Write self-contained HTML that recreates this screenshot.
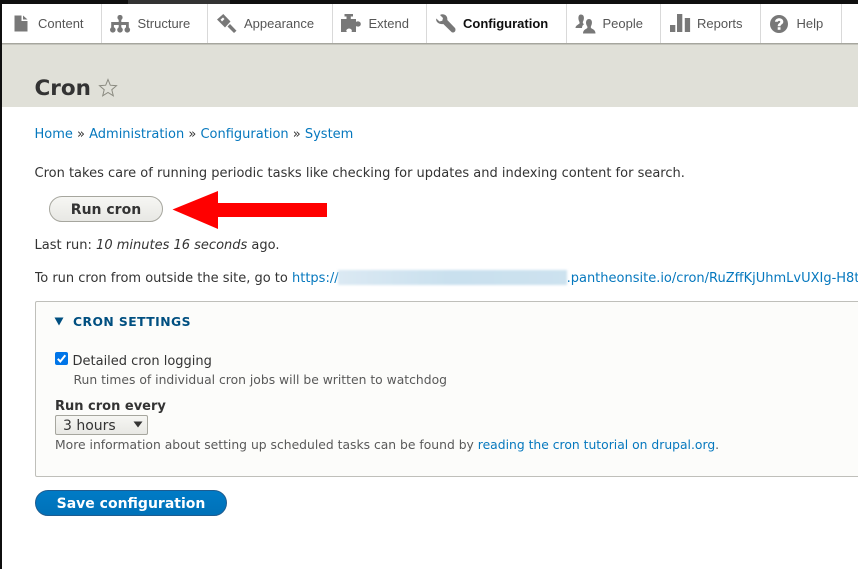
<!DOCTYPE html>
<html><head><meta charset="utf-8"><style>
html,body{margin:0;padding:0;width:858px;height:569px;overflow:hidden;background:#fff}
body{position:relative;font-family:"DejaVu Sans",sans-serif;font-size:13px;color:#333}
.a{position:absolute;white-space:nowrap}
.n{position:absolute;top:4px;height:39px;line-height:39px;font-family:"Liberation Sans",sans-serif;font-size:13px;color:#565656;white-space:nowrap}
.d{position:absolute;top:4px;height:39px;width:1px;background:#d9d9d9}
svg{position:absolute}
a{color:#0678be;text-decoration:none}
.t{line-height:16px}
</style></head><body>
<div class="a" style="left:0;top:0;width:858px;height:4px;background:#0f0f0f"></div>
<div class="a" style="left:128px;top:0;width:102px;height:4px;background:#333"></div>
<div class="a" style="left:2px;top:4px;width:856px;height:39px;background:#fff"></div>
<div class="a" style="left:2px;top:45px;width:856px;height:62px;background:#e0e0d8"></div>
<div class="a" style="left:2px;top:43px;width:856px;height:1px;background:#a6a69e"></div>
<div class="a" style="left:2px;top:44px;width:856px;height:1px;background:#c4c4bc"></div>

<div class="d" style="left:101px"></div><div class="d" style="left:207px"></div><div class="d" style="left:332px"></div><div class="d" style="left:426px"></div><div class="d" style="left:566px"></div><div class="d" style="left:660px"></div><div class="d" style="left:760px"></div><div class="d" style="left:841px"></div>

<svg style="left:14px;top:15px" width="14" height="17"><path d="M0.500 0.500H7.500V6H13.500V16.500H0.500Z M9 0.500L13.500 4.500H9Z" fill="#787878"/></svg>
<div class="n" style="left:38px">Content</div>

<svg style="left:110px;top:15px" width="21" height="18" fill="#787878"><circle cx="10" cy="2.500" r="2.600"/><circle cx="2.800" cy="14.800" r="2.800"/><circle cx="10" cy="14.800" r="2.800"/><circle cx="17.300" cy="14.800" r="2.800"/><path d="M8.700 3H11.300V7H18.800V13H16V10H11.300V13H8.700V10H3.900V13H1.200V7H8.700Z"/></svg>
<div class="n" style="left:137.500px">Structure</div>

<svg style="left:217px;top:14px" width="20" height="20" fill="#787878"><path d="M0 5.500L6.300 0L13.500 7.500L8 13.500Z M3.500 5.600L6 3.500L7.500 5L5 7.500Z" fill-rule="evenodd"/><path d="M10.500 12.500L13 10L19.500 16.800L17 19Z"/></svg>
<div class="n" style="left:244px">Appearance</div>

<svg style="left:341px;top:14px" width="20" height="19" fill="#787878"><path d="M3.500 0H12V2.500H9.800V5H15V8C16 7 19.800 7 19.800 10C19.800 13 16 13 15 12V18H10.500C12 15.500 8.500 13.500 6.500 15C5 16 5 17 6 18H0V5H5.500V2.500H3.500Z"/></svg>
<div class="n" style="left:368.500px">Extend</div>

<svg style="left:436px;top:14px" width="20" height="19" fill="#787878"><path d="M0.300 4.500L3.500 7.500L6.300 6.800L7 4L4 1C7.500 -1 12 1.500 11.300 6L19 14C20 15.500 19.500 18.500 16.800 18.500C16 18.500 15.500 18 15 17.500L7.300 10C3.500 10.800 -0.700 8 0.300 4.500Z"/></svg>
<div class="n" style="left:463px;color:#0f0f0f;font-weight:bold">Configuration</div>

<svg style="left:575px;top:14px" width="21" height="20" fill="#787878"><path d="M6 0.500C9.500 0.500 9.500 5 8 7.500C7.500 8.800 8 9.500 9 10.200C7.500 11 7 12.500 7 14H0.500C0.500 11.500 3.500 10.500 4.500 9.500C4.800 8.800 4.500 8 4 7C3 4.500 3 0.500 6 0.500Z"/><path d="M14 5C17 5 17.500 8.500 16.500 11C16 12 15.500 13 16 14C17 15 20.500 15.500 20.500 19.500H8C8 15.500 11.500 15 12.300 14C12.800 13 12 12 11.500 11C10.500 8.500 11 5 14 5Z"/></svg>
<div class="n" style="left:602.500px">People</div>

<svg style="left:670px;top:14px" width="21" height="18" fill="#787878"><rect x="0" y="11" width="5.300" height="7"/><rect x="7" y="0" width="5.300" height="18"/><rect x="14.800" y="4" width="5.300" height="14"/></svg>
<div class="n" style="left:697px">Reports</div>

<svg style="left:770px;top:15px" width="18" height="18"><circle cx="9" cy="9" r="9" fill="#787878"/><path d="M5 6.800C5.300 2 13.300 2.300 13.300 6.800C13.300 9.500 10.500 9.300 10.500 11.300H7.700C7.700 8.300 10.300 8.300 10.300 6.800C10.300 5.500 8 5.500 7.900 6.800Z" fill="#fff"/><rect x="7.700" y="12.200" width="2.800" height="2.600" fill="#fff"/></svg>
<div class="n" style="left:796.500px">Help</div>

<div class="a" style="left:34.500px;top:75px;font-size:21.500px;line-height:28px;font-weight:bold;color:#333">Cron</div>
<svg style="left:98px;top:78px" width="20" height="19"><path d="M10 1.500L12.300 7.200L18.500 7.700L13.800 11.700L15.300 17.800L10 14.500L4.700 17.800L6.200 11.700L1.500 7.700L7.700 7.200Z" fill="none" stroke="#8a8a80" stroke-width="1"/></svg>

<div class="a t" style="left:34.500px;top:127px"><a href="#">Home</a> » <a href="#">Administration</a> » <a href="#">Configuration</a> » <a href="#">System</a></div>
<div class="a t" style="left:34.500px;top:166px">Cron takes care of running periodic tasks like checking for updates and indexing content for search.</div>

<div class="a" style="left:49px;top:196px;width:112px;height:24px;border:1px solid #a6a69e;border-radius:13px;background:linear-gradient(#f6f6f3,#e8e8e4);text-align:center;font-size:14px;line-height:26px;font-weight:bold;color:#333">Run cron</div>
<svg style="left:172px;top:190px" width="156" height="40"><path d="M0.500 19.500L46 1V13H155V27H46V39Z" fill="#f00"/></svg>

<div class="a t" style="left:34.500px;top:238px">Last run: <i>10 minutes 16 seconds</i> ago.</div>
<div class="a t" style="left:34.500px;top:271px;width:823px;overflow:hidden">To run cron from outside the site, go to <a href="#">https://<span style="display:inline-block;width:228px"></span>.pantheonsite.io/cron/RuZffKjUhmLvUXIg-H8tAbCdEfGh</a></div>
<div class="a" style="left:338px;top:270px;width:229px;height:15px;background:linear-gradient(90deg,#dbe9f3,#c9e0ee 50%,#cde2ef);filter:blur(1px)"></div>

<div class="a" style="left:35px;top:301px;width:830px;height:174px;border:1px solid #bfbfba;border-radius:2px;background:#fcfcfa"></div>
<svg style="left:54px;top:317px" width="10" height="9"><path d="M0.500 0.500H9.500L5 8.500Z" fill="#004f80"/></svg>
<div class="a t" style="left:73px;top:314px;font-size:12.350px;letter-spacing:.45px;font-weight:bold;color:#004f80">CRON SETTINGS</div>

<svg style="left:55px;top:352px" width="13" height="13"><rect width="13" height="13" rx="2" fill="#0075e8"/><path d="M2.800 6.800L5.300 9.500L10.300 3.300" fill="none" stroke="#fff" stroke-width="2"/></svg>
<div class="a t" style="left:72.500px;top:353.500px">Detailed cron logging</div>
<div class="a t" style="left:73.500px;top:372px;font-size:12.350px;color:#595959">Run times of individual cron jobs will be written to watchdog</div>
<div class="a t" style="left:55px;top:399px;font-weight:bold;color:#333">Run cron every</div>
<div class="a" style="left:55px;top:415px;width:91px;height:18px;border:1px solid #a6a69e;border-radius:2px;background:linear-gradient(#f6f6f3,#e8e8e4)"></div>
<div class="a" style="left:63px;top:417px;font-size:14px;line-height:18px;color:#333">3 hours</div>
<svg style="left:133px;top:421px" width="10" height="7"><path d="M0.500 0.500H9.500L5 6.500Z" fill="#333"/></svg>
<div class="a t" style="left:55px;top:437px;font-size:12.350px;color:#595959">More information about setting up scheduled tasks can be found by <a href="#">reading the cron tutorial on drupal.org</a>.</div>

<div class="a" style="left:35px;top:490px;width:190px;height:24px;border:1px solid #1e5c90;border-radius:13px;background:linear-gradient(#007bc6,#0071b8);text-align:center;font-size:14px;line-height:26px;font-weight:bold;color:#fff">Save configuration</div>
<div class="a" style="left:0;top:0;width:2px;height:569px;background:#0f0f0f"></div>
</body></html>
